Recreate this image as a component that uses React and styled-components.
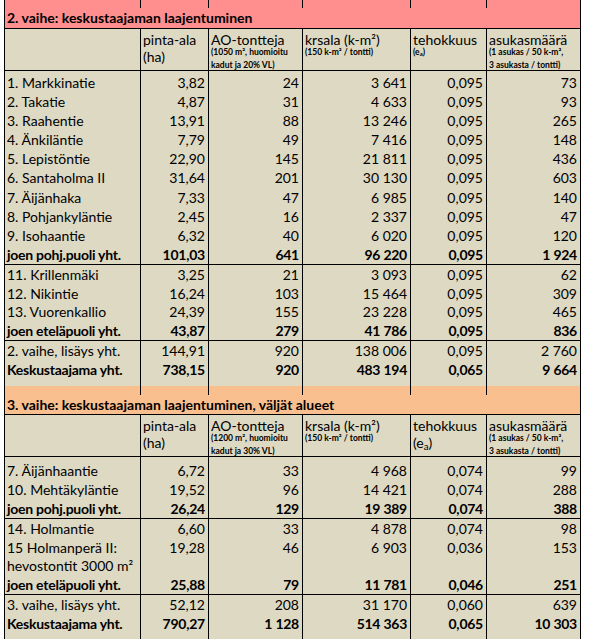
import React from "react";
import styled, { createGlobalStyle } from "styled-components";

const BEIGE = "#DDD9C3";
const PINK = "#FF8F8F";
const ORANGE = "#FABF8F";
const COLS = "136px 68px 94px 108px 76px 93px";

const GlobalStyle = createGlobalStyle`
  * { box-sizing: border-box; }
  html, body { margin: 0; padding: 0; background: #fff; }
  body {
    font-family: Lato, "Open Sans", "Liberation Sans", sans-serif;
    font-size: 14px;
    color: #000;
  }
`;

const Sheet = styled.div`
  margin-left: 4px;
  width: 577px;
  border-left: 1px solid #000;
  border-right: 1px solid #000;
  background: ${BEIGE};
`;

const Section = styled.section`
  display: flex;
  flex-direction: column;
`;

const Row = styled.div`
  display: grid;
  grid-template-columns: ${COLS};
  height: ${(p) => p.$h}px;
  background: ${(p) => p.$bg || BEIGE};
`;

const Cell = styled.div`
  display: flex;
  align-items: flex-end;
  justify-content: ${(p) => (p.$num ? "flex-end" : "flex-start")};
  padding: 0 3px 0 2px;
  border-right: 1px solid #000;
  &:last-child {
    border-right: 0;
  }
  font-weight: ${(p) => (p.$bold ? 700 : 400)};
  letter-spacing: ${(p) => (p.$bold ? "-0.25px" : "0")};
  line-height: 19px;
  white-space: nowrap;
  min-width: 0;
`;

const Title = styled.div`
  height: ${(p) => p.$h}px;
  line-height: ${(p) => p.$h - 1}px;
  background: ${(p) => p.$bg};
  border-bottom: 1px solid #000;
  padding-left: 2px;
  font-weight: 700;
  white-space: nowrap;
`;

const HeadRow = styled.div`
  display: grid;
  grid-template-columns: ${COLS};
  height: 42px;
  border-bottom: 1px solid #000;
  background: ${BEIGE};
`;

const HeadCell = styled.div`
  display: flex;
  flex-direction: column;
  padding: 2px 2px 0 2px;
  border-right: 1px solid #000;
  &:last-child {
    border-right: 0;
  }
  white-space: nowrap;
`;

const HeadMain = styled.span`
  line-height: 17px;
`;

const HeadSmall = styled.span`
  font-size: 8.5px;
  font-weight: 700;
  line-height: 13px;
  margin-top: ${(p) => (p.$first ? "-2px" : "0")};
`;

const Group = styled.div`
  border-top: ${(p) => (p.$line ? "1px solid #000" : "0")};
`;

const EmptyCells = () => (
  <>
    {Array.from({ length: 6 }).map((_, i) => (
      <Cell key={i} />
    ))}
  </>
);

const DataRow = ({ cells, bold, h }) => (
  <Row $h={h}>
    {cells.map((c, i) => (
      <Cell key={i} $num={i > 0} $bold={bold}>
        {c}
      </Cell>
    ))}
  </Row>
);

const Sub = styled.sub`
  font-size: 0.7em;
  vertical-align: -0.25em;
  line-height: 0;
`;

const Header = ({ ao, eMain }) => (
  <HeadRow>
    <HeadCell />
    <HeadCell>
      <HeadMain>pinta-ala</HeadMain>
      <HeadMain>(ha)</HeadMain>
    </HeadCell>
    <HeadCell>
      <HeadMain>AO-tontteja</HeadMain>
      <HeadSmall $first>{ao[0]}</HeadSmall>
      <HeadSmall>{ao[1]}</HeadSmall>
    </HeadCell>
    <HeadCell>
      <HeadMain>krsala (k-m²)</HeadMain>
      <HeadSmall $first>(150 k-m² / tontti)</HeadSmall>
    </HeadCell>
    <HeadCell>
      <HeadMain>tehokkuus</HeadMain>
      {eMain ? (
        <HeadMain>
          (e<Sub>a</Sub>)
        </HeadMain>
      ) : (
        <HeadSmall $first>
          (e<Sub>a</Sub>)
        </HeadSmall>
      )}
    </HeadCell>
    <HeadCell>
      <HeadMain>asukasmäärä</HeadMain>
      <HeadSmall $first>(1 asukas / 50 k-m²,</HeadSmall>
      <HeadSmall>3 asukasta / tontti)</HeadSmall>
    </HeadCell>
  </HeadRow>
);

const s2g1 = [
  ["1. Markkinatie", "3,82", "24", "3 641", "0,095", "73"],
  ["2. Takatie", "4,87", "31", "4 633", "0,095", "93"],
  ["3. Raahentie", "13,91", "88", "13 246", "0,095", "265"],
  ["4. Änkiläntie", "7,79", "49", "7 416", "0,095", "148"],
  ["5. Lepistöntie", "22,90", "145", "21 811", "0,095", "436"],
  ["6. Santaholma II", "31,64", "201", "30 130", "0,095", "603"],
  ["7. Äijänhaka", "7,33", "47", "6 985", "0,095", "140"],
  ["8. Pohjankyläntie", "2,45", "16", "2 337", "0,095", "47"],
  ["9. Isohaantie", "6,32", "40", "6 020", "0,095", "120"],
  ["joen pohj.puoli yht.", "101,03", "641", "96 220", "0,095", "1 924", true],
];
const s2g2 = [
  ["11. Krillenmäki", "3,25", "21", "3 093", "0,095", "62"],
  ["12. Nikintie", "16,24", "103", "15 464", "0,095", "309"],
  ["13. Vuorenkallio", "24,39", "155", "23 228", "0,095", "465"],
  ["joen eteläpuoli yht.", "43,87", "279", "41 786", "0,095", "836", true],
];
const s2g3 = [
  ["2. vaihe, lisäys yht.", "144,91", "920", "138 006", "0,095", "2 760"],
  ["Keskustaajama yht.", "738,15", "920", "483 194", "0,065", "9 664", true],
];

const s3g1 = [
  ["7. Äijänhaantie", "6,72", "33", "4 968", "0,074", "99"],
  ["10. Mehtäkyläntie", "19,52", "96", "14 421", "0,074", "288"],
  ["joen pohj.puoli yht.", "26,24", "129", "19 389", "0,074", "388", true],
];
const s3g2 = [
  ["14. Holmantie", "6,60", "33", "4 878", "0,074", "98"],
  ["15 Holmanperä II:", "19,28", "46", "6 903", "0,036", "153"],
  ["hevostontit 3000 m²", "", "", "", "", ""],
  ["joen eteläpuoli yht.", "25,88", "79", "11 781", "0,046", "251", true],
];
const s3g3 = [
  ["3. vaihe, lisäys yht.", "52,12", "208", "31 170", "0,060", "639"],
  ["Keskustaajama yht.", "790,27", "1 128", "514 363", "0,065", "10 303", true],
];

const nb = (s) => s.replace(/ /g, "\u00a0");

const renderRows = (rows, heights) =>
  rows.map((r, i) => (
    <DataRow
      key={i}
      cells={r.slice(0, 6).map((c, j) => (j > 0 ? nb(c) : c))}
      bold={r[6]}
      h={typeof heights === "function" ? heights(i) : heights}
    />
  ));

export default function App() {
  return (
    <>
      <GlobalStyle />
      <Sheet>
        <Section>
          <Row $h={8} $bg={PINK}>
            <EmptyCells />
          </Row>
          <Title $bg={PINK} $h={21}>
            2. vaihe: keskustaajaman laajentuminen
          </Title>
          <Header ao={["(1050 m², huomioitu", "kadut ja 20% VL)"]} />
          <Group>{renderRows(s2g1, (i) => (i === 0 ? 21 : 19.1))}</Group>
          <Group $line>{renderRows(s2g2, 18.75)}</Group>
          <Group $line>{renderRows(s2g3, 19)}</Group>
          <Row $h={7}>
            <EmptyCells />
          </Row>
        </Section>
        <Section>
          <Row $h={9} $bg={ORANGE}>
            <EmptyCells />
          </Row>
          <Title $bg={ORANGE} $h={20}>
            3. vaihe: keskustaajaman laajentuminen, väljät alueet
          </Title>
          <Header ao={["(1200 m², huomioitu", "kadut ja 30% VL)"]} eMain />
          <Group>{renderRows(s3g1, (i) => (i === 0 ? 23 : 19))}</Group>
          <Group $line>{renderRows(s3g2, 18.75)}</Group>
          <Group $line>{renderRows(s3g3, 19)}</Group>
          <Row $h={10}>
            <EmptyCells />
          </Row>
        </Section>
      </Sheet>
    </>
  );
}
